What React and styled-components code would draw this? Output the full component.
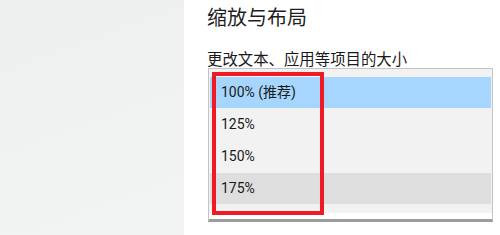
import styled, { createGlobalStyle } from 'styled-components';

const GlobalStyle = createGlobalStyle`
  html, body {
    margin: 0;
    padding: 0;
    background: #ffffff;
  }
  body {
    font-family: Roboto, "Noto Sans CJK SC", sans-serif;
    color: #1a1a1a;
  }
`;

const Page = styled.div`
  display: flex;
  width: 500px;
  height: 235px;
  overflow: hidden;
`;

const SidePanel = styled.div`
  width: 184px;
  flex-shrink: 0;
  height: 100%;
  background: linear-gradient(160deg, #eef0f0 0%, #f0f1f1 50%, #f2f3f3 100%);
`;

const Content = styled.div`
  flex: 1;
  padding-left: 23px;
`;

const Heading = styled.h2`
  margin: 5px 0 0;
  font-family: "Noto Sans CJK SC", sans-serif;
  font-weight: 400;
  font-size: 20px;
  line-height: 24px;
  color: #1f1f1f;
`;

const Label = styled.div`
  margin-top: 19px;
  margin-left: 0;
  font-family: "Noto Sans CJK SC", sans-serif;
  font-size: 15.4px;
  line-height: 20px;
  color: #1a1a1a;
`;

const ListBox = styled.div`
  position: relative;
  width: 283px;
  height: 150px;
  margin-left: 1px;
  background: #ffffff;
  border: 1px solid #c4c4c4;
  border-bottom: 3px solid #9d9d9d;
`;

const ListInner = styled.div`
  height: 144px;
  box-sizing: border-box;
  padding: 8px 1px 0;
  background: #f2f2f2;
  display: flex;
  flex-direction: column;
  gap: 1px;
`;

const Option = styled.div`
  height: 31px;
  line-height: 31px;
  padding-left: 11px;
  font-size: 14px;
  color: #1a1a1a;
  background: ${p => (p.$selected ? '#a6d6fd' : p.$hover ? '#dedede' : 'transparent')};
`;

const Highlight = styled.div`
  position: absolute;
  left: 3px;
  top: 3px;
  width: 112px;
  height: 143px;
  box-sizing: border-box;
  border: 4px solid #ed1c24;
  pointer-events: none;
`;

const options = [
  { label: '100% (推荐)', selected: true },
  { label: '125%' },
  { label: '150%' },
  { label: '175%', hover: true },
];

export default function App() {
  return (
    <>
      <GlobalStyle />
      <Page>
        <SidePanel />
        <Content>
          <Heading>缩放与布局</Heading>
          <Label>更改文本、应用等项目的大小</Label>
          <ListBox>
            <ListInner>
              {options.map(o => (
                <Option key={o.label} $selected={o.selected} $hover={o.hover}>
                  {o.label}
                </Option>
              ))}
            </ListInner>
            <Highlight />
          </ListBox>
        </Content>
      </Page>
    </>
  );
}
